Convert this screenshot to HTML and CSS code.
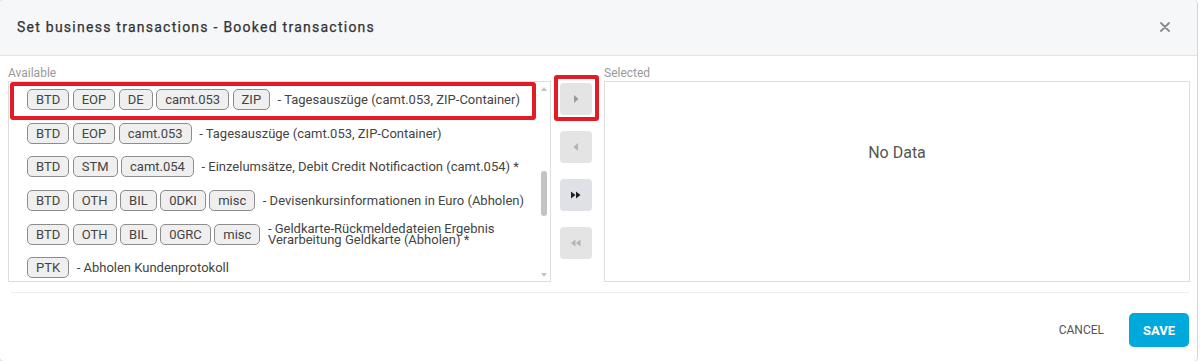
FILE: index.html
```html
<!DOCTYPE html>
<html lang="en">
<head>
  <meta charset="UTF-8">
  <meta name="viewport" content="width=device-width, initial-scale=1.0">
  <title>Set business transactions</title>
  <link rel="stylesheet" href="styles.css">
</head>
<body>
  <div class="dialog">
    <div class="dialog-header">
      <h2>Set business transactions - Booked transactions</h2>
      <span class="close-btn">
        <svg width="10" height="10" viewBox="0 0 10 10"><path d="M1 1L9 9M9 1L1 9" stroke="#8a8a8a" stroke-width="1.8" stroke-linecap="round"/></svg>
      </span>
    </div>
    <div class="dialog-body">
      <div class="picker">
        <div class="field-label">Available</div>
        <div class="list-box">
          <div class="list-rows">
            <div class="row">
              <span class="chip">BTD</span><span class="chip">EOP</span><span class="chip">DE</span><span class="chip">camt.053</span><span class="chip">ZIP</span>
              <span class="desc">- Tagesauszüge (camt.053, ZIP-Container)</span>
            </div>
            <div class="row">
              <span class="chip">BTD</span><span class="chip">EOP</span><span class="chip">camt.053</span>
              <span class="desc">- Tagesauszüge (camt.053, ZIP-Container)</span>
            </div>
            <div class="row">
              <span class="chip">BTD</span><span class="chip">STM</span><span class="chip">camt.054</span>
              <span class="desc">- Einzelumsätze, Debit Credit Notificaction (camt.054) *</span>
            </div>
            <div class="row">
              <span class="chip">BTD</span><span class="chip">OTH</span><span class="chip">BIL</span><span class="chip">0DKI</span><span class="chip">misc</span>
              <span class="desc">- Devisenkursinformationen in Euro (Abholen)</span>
            </div>
            <div class="row">
              <span class="chip">BTD</span><span class="chip">OTH</span><span class="chip">BIL</span><span class="chip">0GRC</span><span class="chip">misc</span>
              <span class="desc wrap">- Geldkarte-Rückmeldedateien Ergebnis Verarbeitung Geldkarte (Abholen) *</span>
            </div>
            <div class="row">
              <span class="chip">PTK</span>
              <span class="desc">- Abholen Kundenprotokoll</span>
            </div>
          </div>
          <div class="scrollbar">
            <span class="arrow-up"></span>
            <span class="thumb"></span>
            <span class="arrow-down"></span>
          </div>
          <!-- annotation -->
          <div class="mark mark-row"></div>
        </div>
      </div>

      <div class="move-buttons">
        <button class="move-btn disabled">
          <svg width="10" height="10" viewBox="0 0 10 10"><path d="M3 1L7.5 5L3 9Z" fill="#9a9a9a"/></svg>
          <span class="mark mark-btn"></span>
        </button>
        <button class="move-btn disabled">
          <svg width="10" height="10" viewBox="0 0 10 10"><path d="M7 1L2.5 5L7 9Z" fill="#b4b4b4"/></svg>
        </button>
        <button class="move-btn active">
          <svg width="12" height="10" viewBox="0 0 12 10"><path d="M1 1.5L5.5 5L1 8.5ZM6 1.5L10.5 5L6 8.5Z" fill="#1f1f1f"/></svg>
        </button>
        <button class="move-btn disabled">
          <svg width="12" height="10" viewBox="0 0 12 10"><path d="M5.5 1.5L1 5L5.5 8.5ZM10.5 1.5L6 5L10.5 8.5Z" fill="#b4b4b4"/></svg>
        </button>
      </div>

      <div class="picker picker-right">
        <div class="field-label">Selected</div>
        <div class="list-box empty">
          <div class="no-data">No Data</div>
        </div>
      </div>
    </div>
    <div class="divider"></div>
    <div class="dialog-footer">
      <button class="cancel-btn">CANCEL</button>
      <button class="save-btn">SAVE</button>
    </div>
  </div>
</body>
</html>
```

FILE: styles.css
```css
body {
  font-family: Roboto, 'Liberation Sans', Arial, sans-serif;
  margin: 0;
  background: #fff;
  color: #333;
}
.dialog {
  width: 1197px;
  height: 361px;
  background: #fff;
  border-radius: 4px;
  box-shadow: 0 0 0 1px #d6d6d6;
  overflow: hidden;
  box-sizing: border-box;
}
.dialog-header {
  height: 56px;
  background: #f6f7f9;
  border-bottom: 1px solid #e3e3e3;
  box-sizing: border-box;
  display: flex;
  align-items: center;
  justify-content: space-between;
  padding: 0 27px 0 17px;
}
.dialog-header h2 {
  margin: 0;
  font-size: 14px;
  font-weight: 400;
  letter-spacing: 1.25px;
  color: #333;
  padding-bottom: 2px;
  -webkit-text-stroke: 0.25px #333;
}
.close-btn {
  display: flex;
  padding-bottom: 1px;
}
.dialog-body {
  display: flex;
  padding: 10px 7px 0 8px;
}
.picker {
  width: 543px;
}
.picker-right {
  flex: 1;
}
.field-label {
  font-size: 12px;
  line-height: 15px;
  color: #9a9a9a;
}
.list-box {
  position: relative;
  height: 201px;
  border: 1px solid #dedede;
  box-sizing: border-box;
  display: flex;
  overflow: hidden;
}
.list-rows {
  flex: 1;
  padding-top: 1px;
}
.row {
  height: 33.6px;
  display: flex;
  align-items: center;
  padding-left: 18px;
}
.chip {
  display: inline-block;
  height: 21px;
  line-height: 19px;
  padding: 0 8px;
  margin-right: 3.5px;
  border: 1px solid #8c8c8c;
  border-radius: 5px;
  background: #efefef;
  font-size: 13px;
  color: #444;
  box-sizing: border-box;
}
.desc {
  margin-left: 4px;
  font-size: 13px;
  color: #444;
  white-space: nowrap;
}
.desc.wrap {
  white-space: normal;
  line-height: 11px;
  flex: 1;
  min-width: 0;
  padding-right: 20px;
}
.scrollbar {
  width: 10px;
  margin-right: 1px;
  display: flex;
  flex-direction: column;
  align-items: center;
  padding: 5px 0 4px;
  box-sizing: border-box;
}
.arrow-up, .arrow-down {
  width: 0;
  height: 0;
  border-left: 3px solid transparent;
  border-right: 3px solid transparent;
}
.arrow-up {
  border-bottom: 4px solid #c4c4c4;
}
.arrow-down {
  border-top: 4px solid #c4c4c4;
  margin-top: auto;
}
.thumb {
  width: 6px;
  height: 45px;
  margin-top: 80px;
  border-radius: 3px;
  background: #c3c3c3;
}
.mark {
  position: absolute;
  border: 4px solid #e31b24;
  border-radius: 3px;
  box-sizing: border-box;
  pointer-events: none;
}
.mark-row {
  left: 1px;
  top: 0;
  width: 526px;
  height: 38px;
}
.move-buttons {
  display: flex;
  flex-direction: column;
  gap: 16px;
  margin: 17px 12px 0 9px;
}
.move-btn {
  position: relative;
  width: 32px;
  height: 32px;
  border: none;
  border-radius: 4px;
  display: flex;
  align-items: center;
  justify-content: center;
  padding: 0;
}
.move-btn.disabled {
  background: #e4e4e4;
}
.move-btn.active {
  background: #dfe1e6;
}
.mark-btn {
  left: -6px;
  top: -8px;
  width: 45px;
  height: 46px;
}
.empty {
  justify-content: center;
  padding-top: 61px;
}
.no-data {
  font-size: 16px;
  line-height: 19px;
  color: #555;
}
.divider {
  height: 1px;
  background: #ececec;
  margin: 10px 8px 0 11px;
}
.dialog-footer {
  display: flex;
  justify-content: flex-end;
  align-items: center;
  padding: 20px 8px 0 0;
}
.cancel-btn {
  background: none;
  border: none;
  font-family: inherit;
  font-size: 12px;
  color: #555;
  padding: 0;
  margin-right: 25px;
}
.save-btn {
  width: 60px;
  height: 34px;
  border: none;
  border-radius: 5px;
  background: #00a9db;
  color: #fff;
  font-family: inherit;
  font-size: 13px;
  font-weight: bold;
}
```
